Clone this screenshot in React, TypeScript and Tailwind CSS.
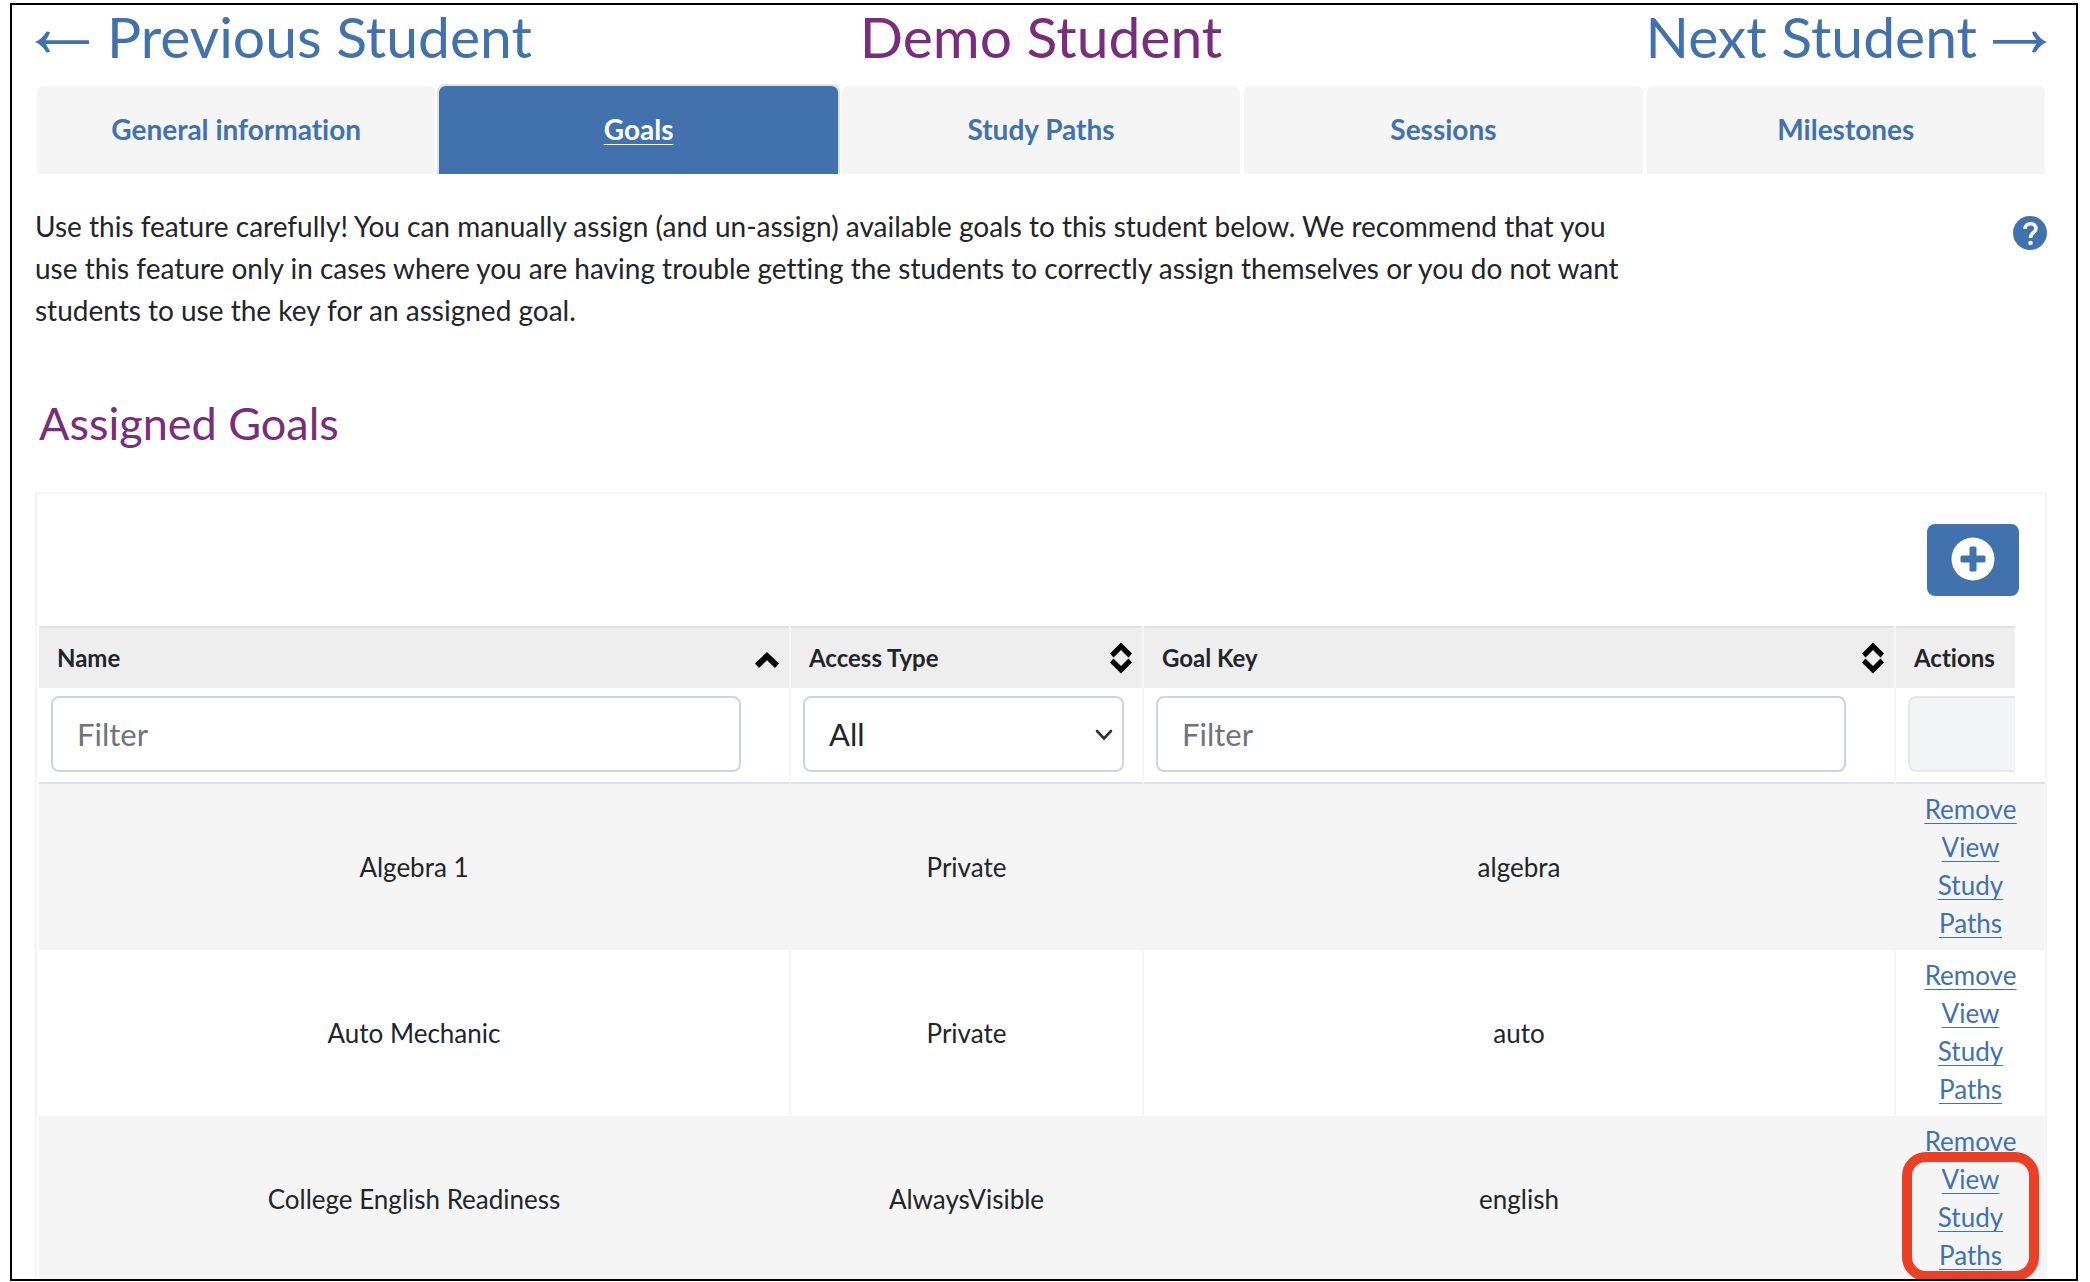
import React, { useState } from 'react';

interface Goal {
  name: string;
  access: string;
  goalKey: string;
}

const TABS = ['General information', 'Goals', 'Study Paths', 'Sessions', 'Milestones'];

const GOALS: Goal[] = [
  { name: 'Algebra 1', access: 'Private', goalKey: 'algebra' },
  { name: 'Auto Mechanic', access: 'Private', goalKey: 'auto' },
  { name: 'College English Readiness', access: 'AlwaysVisible', goalKey: 'english' },
];

const HIGHLIGHTED = 'College English Readiness';

const Arrow = ({ className = '' }: { className?: string }) => (
  <svg viewBox="0 0 54 22" className={`h-[22px] w-[54px] ${className}`} fill="currentColor" aria-hidden="true">
    <path d="M0 11 C5 9 9 5 11.500 0.500 L15 1 C14 4 12.500 7 10.500 9.300 H54 V12.900 H10.500 C12.500 15 14 18 15 21 L11.500 21.500 C9 17 5 13 0 11 Z" />
  </svg>
);

const SortIcon = ({ sorted }: { sorted?: boolean }) =>
  sorted ? (
    <svg viewBox="0 0 24 16" className="mt-1 h-4 w-6" aria-hidden="true">
      <path d="M12 0 L24 11.500 L20 16 L12 8.200 L4 16 L0 11.500 Z" />
    </svg>
  ) : (
    <svg viewBox="0 0 22 32" className="h-8 w-[22px]" aria-hidden="true">
      <path d="M11 0.500 L22 11.500 L18.500 15.500 L11 8 L3.500 15.500 L0 11.500 Z" />
      <path d="M11 31.500 L22 20.500 L18.500 16.500 L11 24 L3.500 16.500 L0 20.500 Z" />
    </svg>
  );

const Header = () => (
  <header className="grid grid-cols-[1fr_auto_1fr] items-center text-[57px] leading-[63px]">
    <a href="#previous" className="flex items-center gap-[18px] text-[#4172ae]">
      <Arrow className="mt-2.5" />
      Previous Student
    </a>
    <h1 className="text-[#7a2c7d]">Demo Student</h1>
    <a href="#next" className="flex items-center justify-end gap-4 text-[#4172ae]">
      Next Student
      <Arrow className="mt-2.5 rotate-180" />
    </a>
  </header>
);

const Tabs = () => (
  <ul className="mt-4 flex text-[28px] leading-[42px] font-bold">
    {TABS.map((tab) => (
      <li key={tab} className="flex-1">
        <a
          href="#tab"
          className={`block rounded-t-lg border-2 border-b-0 bg-clip-padding pt-[22px] pb-6 text-center ${
            tab === 'Goals'
              ? 'border-[#dee2e6] bg-[#4172ae] text-white underline decoration-1 underline-offset-4'
              : 'border-transparent bg-[#f5f5f5] text-[#4172ae]'
          }`}
        >
          {tab}
        </a>
      </li>
    ))}
  </ul>
);

const inputClass = 'h-[76px] w-full rounded-lg border-2 border-[#ced4da] bg-white px-6 text-[31px] placeholder:text-[#6c757d] outline-none';
const sortButtonClass = 'flex h-[62px] w-full items-center justify-between border-t-2 border-[#dee2e6] bg-[#eee] pr-2.5 pl-[18px]';

export default function App() {
  const [nameFilter, setNameFilter] = useState('');
  const [keyFilter, setKeyFilter] = useState('');
  const [access, setAccess] = useState('All');

  const goals = GOALS.filter(
    (goal) =>
      goal.name.toLowerCase().includes(nameFilter.toLowerCase()) &&
      goal.goalKey.toLowerCase().includes(keyFilter.toLowerCase()) &&
      (access === 'All' || goal.access === access)
  );

  return (
    <div className="h-screen bg-white pt-[3px] pr-3 pb-px pl-2.5 font-['Lato',sans-serif] text-[#212529] [font-variant-ligatures:none]">
      <div className="h-full overflow-hidden border-2 border-black pr-[29px] pl-[23px]">
        <Header />
        <Tabs />

        {/* Intro */}
        <div className="mt-[31px] flex items-start justify-between">
          <p className="max-w-[1620px] text-[28px] leading-[42px]">
            Use this feature carefully! You can manually assign (and un-assign) available goals to this student below. We
            recommend that you use this feature only in cases where you are having trouble getting the students to
            correctly assign themselves or you do not want students to use the key for an assigned goal.
          </p>
          <button aria-label="Help" className="mt-[11px]">
            <svg viewBox="0 0 34 34" className="h-[34px] w-[34px]" fill="none">
              <circle cx="17" cy="17" r="17" fill="#4172ae" />
              <path d="M12 13 C12 6 23 6 23 12.500 C23 16.500 17.500 16.500 17.500 22" stroke="white" strokeWidth="3.600" />
              <circle cx="17.500" cy="27" r="2.300" fill="white" />
            </svg>
          </button>
        </div>

        <h2 className="mt-[66px] pl-1 text-[45px] leading-[52px] text-[#7a2c7d]">Assigned Goals</h2>

        {/* Goals table */}
        <section className="mt-[43px] border-2 border-[#f5f5f5] pl-0.5">
          <div className="flex justify-end pt-[30px] pr-[26px] pb-[30px]">
            <button aria-label="Add goal" className="flex h-[72px] w-[92px] justify-center rounded-lg bg-[#4172ae] pt-[13px]">
              <svg viewBox="0 0 44 44" className="h-11 w-11">
                <circle cx="22" cy="22" r="21.500" fill="white" />
                <path d="M18.500 11 Q18.500 9.500 20 9.500 H24 Q25.500 9.500 25.500 11 V18.500 H33 Q34.500 18.500 34.500 20 V24 Q34.500 25.500 33 25.500 H25.500 V33 Q25.500 34.500 24 34.500 H20 Q18.500 34.500 18.500 33 V25.500 H11 Q9.500 25.500 9.500 24 V20 Q9.500 18.500 11 18.500 H18.500 Z" fill="#4172ae" />
              </svg>
            </button>
          </div>

          <table className="w-full table-fixed border-separate border-spacing-0">
            <colgroup>
              <col />
              <col className="w-[353px]" />
              <col />
              <col className="w-[149px]" />
            </colgroup>
            <thead className="text-left text-[24px] leading-9 font-bold">
              <tr>
                <th className="border-r-2 border-[#f5f5f5] p-0">
                  <button className={sortButtonClass}>
                    Name
                    <SortIcon sorted />
                  </button>
                </th>
                <th className="border-r-2 border-[#f5f5f5] p-0">
                  <button className={sortButtonClass}>
                    Access Type
                    <SortIcon />
                  </button>
                </th>
                <th className="border-r-2 border-[#f5f5f5] p-0">
                  <button className={sortButtonClass}>
                    Goal Key
                    <SortIcon />
                  </button>
                </th>
                <th className="p-0">
                  <div className="mr-[30px] flex h-[62px] items-center border-t-2 border-[#dee2e6] bg-[#eee] pl-[18px]">Actions</div>
                </th>
              </tr>
              <tr className="font-normal">
                <td className="border-r-2 border-b-2 border-r-[#f5f5f5] border-b-[#dee2e6] pt-2 pr-12 pb-2.5 pl-3">
                  <input
                    aria-label="Filter by name"
                    placeholder="Filter"
                    value={nameFilter}
                    onChange={(e) => setNameFilter(e.target.value)}
                    className={inputClass}
                  />
                </td>
                <td className="border-r-2 border-b-2 border-r-[#f5f5f5] border-b-[#dee2e6] pt-2 pr-[18px] pb-2.5 pl-3">
                  <div className="relative">
                    <select
                      aria-label="Filter by access type"
                      value={access}
                      onChange={(e) => setAccess(e.target.value)}
                      className={`${inputClass} appearance-none`}
                    >
                      <option>All</option>
                      <option>Private</option>
                      <option>AlwaysVisible</option>
                    </select>
                    <svg viewBox="0 0 18 12" className="pointer-events-none absolute top-[33px] right-[11px] h-3 w-[18px]" fill="none" aria-hidden="true">
                      <path d="M2 2 L9 9.500 L16 2" stroke="#333" strokeWidth="2.600" strokeLinecap="round" />
                    </svg>
                  </div>
                </td>
                <td className="border-r-2 border-b-2 border-r-[#f5f5f5] border-b-[#dee2e6] pt-2 pr-12 pb-2.5 pl-3">
                  <input
                    aria-label="Filter by goal key"
                    placeholder="Filter"
                    value={keyFilter}
                    onChange={(e) => setKeyFilter(e.target.value)}
                    className={inputClass}
                  />
                </td>
                <td className="border-b-2 border-[#dee2e6] pt-2 pr-[30px] pb-2.5 pl-3">
                  <input
                    aria-label="Actions filter"
                    disabled
                    className="h-[76px] w-full rounded-l-lg border-2 border-r-0 border-[#e5e7eb] bg-[#f3f4f6]"
                  />
                </td>
              </tr>
            </thead>
            <tbody className="text-center text-[26px] leading-[38px]">
              {goals.map((goal) => (
                <tr key={goal.name} className="odd:bg-[#f5f5f5]">
                  <td className="border-r-2 border-[#f5f5f5]">{goal.name}</td>
                  <td className="border-r-2 border-[#f5f5f5]">{goal.access}</td>
                  <td className="border-r-2 border-[#f5f5f5]">{goal.goalKey}</td>
                  <td className="px-7 pt-1.5 pb-2 text-[#4172ae] underline decoration-1 underline-offset-4">
                    <a href="#remove" className="block">Remove</a>
                    <div className="relative">
                      <a href="#view" className="block">View Study Paths</a>
                      {goal.name === HIGHLIGHTED && (
                        <span className="pointer-events-none absolute -inset-x-[22px] -top-2 -bottom-[7px] rounded-3xl border-10 border-[#eb4025]" />
                      )}
                    </div>
                  </td>
                </tr>
              ))}
            </tbody>
          </table>
        </section>
      </div>
    </div>
  );
}
